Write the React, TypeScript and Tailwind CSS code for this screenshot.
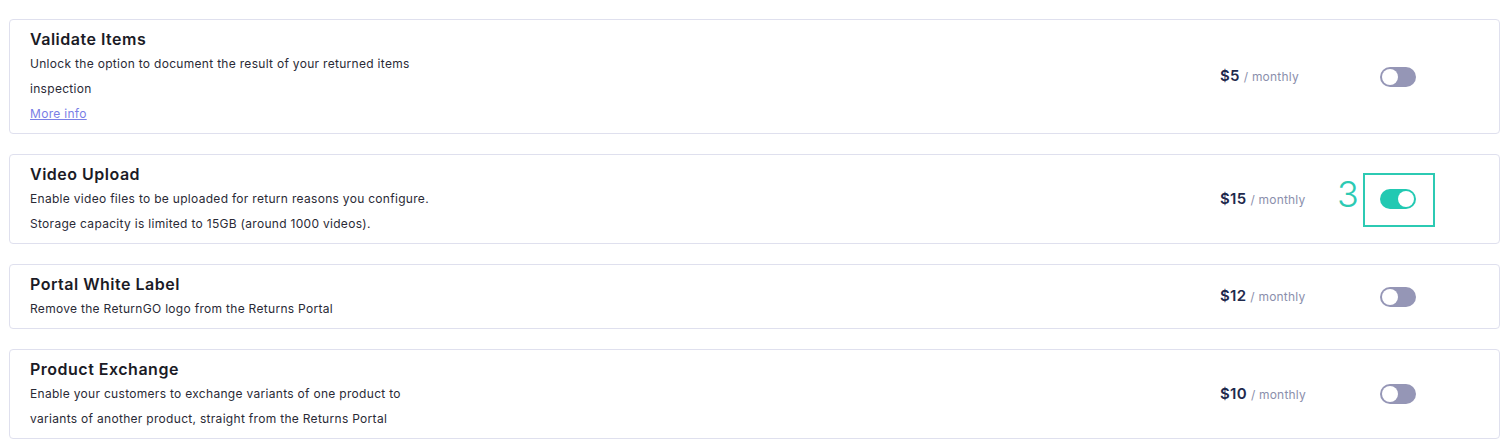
import { useState } from 'react';

interface Addon {
    title: string;
    lines: string[];
    price: number;
    moreInfo?: boolean;
    enabled: boolean;
    marked?: number;
}

const addons: Addon[] = [
    {
        title: 'Validate Items',
        lines: ['Unlock the option to document the result of your returned items', 'inspection'],
        price: 5,
        moreInfo: true,
        enabled: false,
    },
    {
        title: 'Video Upload',
        lines: [
            'Enable video files to be uploaded for return reasons you configure.',
            'Storage capacity is limited to 15GB (around 1000 videos).',
        ],
        price: 15,
        enabled: true,
        marked: 3,
    },
    {
        title: 'Portal White Label',
        lines: ['Remove the ReturnGO logo from the Returns Portal'],
        price: 12,
        enabled: false,
    },
    {
        title: 'Product Exchange',
        lines: [
            'Enable your customers to exchange variants of one product to',
            'variants of another product, straight from the Returns Portal',
        ],
        price: 10,
        enabled: false,
    },
];

function Toggle({ on, onClick }: { on: boolean; onClick: () => void }) {
    return (
        <button
            onClick={onClick}
            className={`relative w-[36px] h-[20px] rounded-full transition-colors ${on ? 'bg-[#22c9b2]' : 'bg-[#9596b6]'}`}
        >
            <span
                className={`absolute top-[2px] w-[16px] h-[16px] rounded-full bg-white transition-all ${on ? 'left-[18px]' : 'left-[2px]'}`}
            />
        </button>
    );
}

export default function App() {
    const [state, setState] = useState(addons.map((a) => a.enabled));

    return (
        <div
            className="bg-white min-h-[447px] pl-[9px] pr-[11px] pt-[19px] flex flex-col gap-[20px]"
            style={{ fontFamily: '"Inter", "Noto Sans", sans-serif' }}
        >
            {addons.map((addon, i) => (
                <div
                    key={addon.title}
                    className="flex items-center border border-[#dfe0ee] rounded-[4px] pl-[20px] py-[7px]"
                >
                    {/* Description */}
                    <div className="flex-1">
                        <h3 className="text-[16px] leading-[24px] font-semibold tracking-[0.5px] text-[#1b1b26]">
                            {addon.title}
                        </h3>
                        {addon.lines.map((line) => (
                            <p key={line} className="text-[12px] leading-[25px] tracking-[0.3px] text-[#2a2a36]">
                                {line}
                            </p>
                        ))}
                        {addon.moreInfo && (
                            <a
                                href="#"
                                className="block text-[12px] leading-[25px] tracking-[0.3px] text-[#7a80e6] underline"
                            >
                                More info
                            </a>
                        )}
                    </div>

                    {/* Price */}
                    <div className="w-[160px] flex items-baseline gap-[4px] -ml-px">
                        <span className="text-[15px] font-semibold tracking-[0.3px] text-[#1f2a4d]">${addon.price}</span>
                        <span className="text-[12px] tracking-[0.2px] text-[#8b8fac]">/ monthly</span>
                    </div>

                    {/* Toggle */}
                    <div className="relative mr-[83px] flex">
                        <Toggle
                            on={state[i]}
                            onClick={() => setState(state.map((s, j) => (j === i ? !s : s)))}
                        />
                        {addon.marked && (
                            <>
                                <div className="absolute left-[-17px] top-[-16px] w-[72px] h-[54px] border-2 border-[#2ccab3]" />
                                <span className="absolute left-[-43px] top-[-15px] text-[36px] leading-[40px] font-light text-[#2ccab3]">
                                    {addon.marked}
                                </span>
                            </>
                        )}
                    </div>
                </div>
            ))}
        </div>
    );
}
